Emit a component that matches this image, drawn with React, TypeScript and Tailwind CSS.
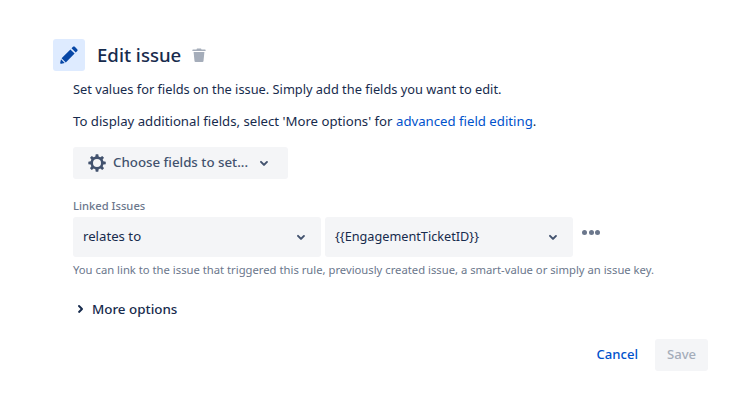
function Chevron({ className }: { className?: string }) {
    return (
        <svg viewBox="0 0 24 24" className={className} width="24" height="24" fill="currentColor">
            <path d="M8.29 10.2a1.02 1.02 0 0 0 0 1.41l2.98 2.98a1.03 1.03 0 0 0 1.46 0l2.98-2.98a1 1 0 0 0-1.41-1.41L12 12.5l-2.3-2.3a1 1 0 0 0-1.41 0z" />
        </svg>
    );
}

function SelectBox({ label, textSize }: { label: string; textSize: string }) {
    return (
        <div className={`w-[248px] h-10 pl-[10px] pr-[8px] rounded-[3px] bg-[#f4f5f7] flex items-center justify-between ${textSize} text-[#172b4d]`}>
            <span>{label}</span>
            <Chevron className="text-[#42526e]" />
        </div>
    );
}

export default function App() {
    return (
        <div className="w-[752px] h-[413px] bg-white overflow-hidden pt-[39px] pl-[53px] pr-[44px] text-[#172b4d] font-['Noto_Sans','Open_Sans',sans-serif]">
            <div className="flex items-center">
                <div className="w-8 h-8 rounded-[3px] bg-[#deebff] flex items-center justify-center">
                    <svg viewBox="0 0 18 18" width="18" height="18" fill="#0747a6">
                        <path d="M13 .8c.5-.5 1.300-.5 1.800 0l2.400 2.400c.5.5.5 1.300 0 1.800l-1.500 1.500-4.200-4.200L13 .8zM10.400 3.400l4.200 4.200-8.800 8.800-4.200-4.200 8.800-8.800zM1 13.300l3.700 3.700-3.300.8c-.7.200-1.300-.4-1.200-1.100L1 13.300z" />
                    </svg>
                </div>
                <h1 className="ml-3 text-[18.6px] leading-8 font-medium">Edit issue</h1>
                <svg viewBox="0 0 16 16" width="16" height="16" fill="#a5adba" className="ml-[10px]">
                    <path d="M6 1.500h4l.5 1H14a.6.6 0 0 1 .6.6v.9H1.400v-.9a.6.6 0 0 1 .6-.6h3.500L6 1.500zM2.600 5h10.800l-.9 9.100a1 1 0 0 1-1 .9H4.500a1 1 0 0 1-1-.9L2.600 5z" />
                </svg>
            </div>

            <div className="ml-5">
                <p className="mt-[8px] text-[12.8px] leading-5">Set values for fields on the issue. Simply add the fields you want to edit.</p>
                <p className="mt-3 text-[13.2px] leading-5">
                    To display additional fields, select 'More options' for <span className="text-[#0052cc]">advanced field editing</span>.
                </p>

                <div className="mt-4 w-[215px] h-8 rounded-[3px] bg-[#f4f5f7] flex items-center pl-[14px] text-[#42526e]">
                    <svg viewBox="0 0 24 24" width="20" height="20" fill="currentColor" fillRule="evenodd">
                        <path d="M10.500 1.500h3l.5 2.800 2 .8 2.300-1.600 2.100 2.100-1.600 2.300.8 2 2.900.5v3l-2.900.5-.8 2 1.600 2.300-2.100 2.100-2.300-1.600-2 .8-.5 2.900h-3l-.5-2.900-2-.8-2.300 1.600-2.100-2.100 1.600-2.300-.8-2-2.800-.5v-3l2.800-.5.8-2-1.600-2.300 2.100-2.100L8 5.100l2-.8.500-2.800zM12 7.200a4.800 4.800 0 1 0 0 9.600 4.800 4.800 0 0 0 0-9.600z" />
                    </svg>
                    <span className="ml-[6px] text-[13.3px] font-medium">Choose fields to set...</span>
                    <Chevron className="ml-[4px]" />
                </div>

                <div className="mt-[19px] text-[11.2px] leading-4 font-medium text-[#6b778c]">Linked Issues</div>
                <div className="mt-[3px] flex items-start gap-[4px]">
                    <SelectBox label="relates to" textSize="text-[13.2px]" />
                    <SelectBox label="{{EngagementTicketID}}" textSize="text-[12.7px]" />
                    <div className="ml-[5px] mt-[13px] flex gap-[1.5px]">
                        <span className="w-[5px] h-[5px] rounded-full bg-[#6b778c]"></span>
                        <span className="w-[5px] h-[5px] rounded-full bg-[#6b778c]"></span>
                        <span className="w-[5px] h-[5px] rounded-full bg-[#6b778c]"></span>
                    </div>
                </div>
                <p className="mt-[5px] text-[11.25px] leading-4 text-[#6b778c]">
                    You can link to the issue that triggered this rule, previously created issue, a smart-value or simply an issue key.
                </p>

                <div className="mt-[19px] h-6 flex items-center -ml-[5px] font-medium text-[13.4px]">
                    <svg viewBox="0 0 24 24" width="24" height="24" fill="#172b4d">
                        <path d="M10.300 8.300a1 1 0 0 0 0 1.400l2.300 2.300-2.300 2.300a1 1 0 0 0 1.400 1.400l3-3a1 1 0 0 0 0-1.400l-3-3a1 1 0 0 0-1.400 0z" />
                    </svg>
                    <span>More options</span>
                </div>
            </div>

            <div className="mt-[18px] flex justify-end items-center gap-[17px] text-[13.1px] font-medium">
                <span className="text-[#0052cc]">Cancel</span>
                <div className="w-[53px] h-8 rounded-[3px] bg-[#f4f5f7] text-[#a5adba] flex items-center justify-center">Save</div>
            </div>
        </div>
    );
}
